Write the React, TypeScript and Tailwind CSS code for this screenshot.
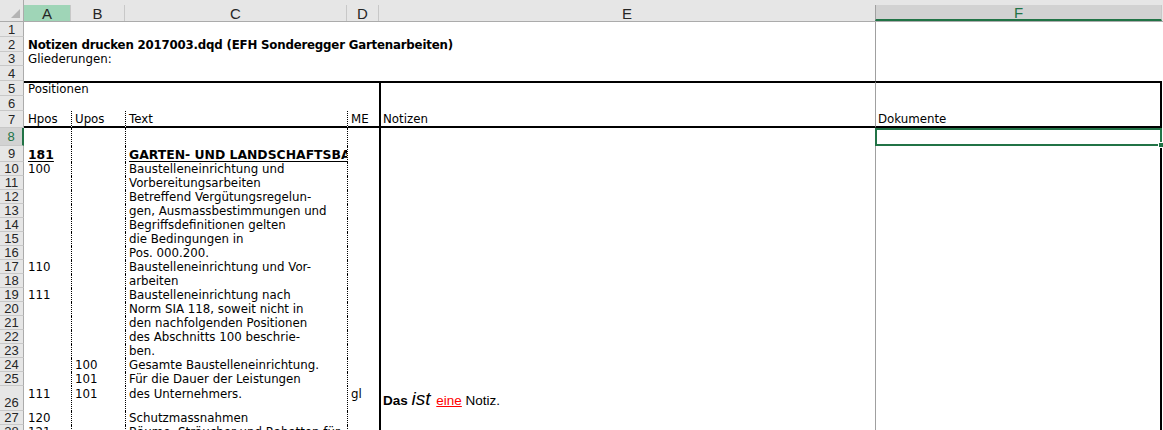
import type { ReactNode } from 'react'

type RowDef = {
  n: number
  h: string
  a?: ReactNode
  b?: ReactNode
  c?: ReactNode
  d?: ReactNode
  e?: ReactNode
  f?: ReactNode
  top?: boolean
  clipC?: boolean
}

const BU = ({ children }: { children: ReactNode }) => <span className="font-bold text-[12.4px] underline underline-offset-2">{children}</span>

const note = (
  <span className="font-['Liberation_Sans',Arial,sans-serif] text-[13.5px] leading-[20px] text-black">
    <span className="font-bold">Das</span>{' '}
    <span className="italic text-[19px]">ist</span>{' '}
    <span className="ml-[2px] text-[#ff0000] underline underline-offset-1">eine</span>{' '}
    Notiz.
  </span>
)

const rows: RowDef[] = [
  { n: 1, h: 'h-[15px]' },
  { n: 2, h: 'h-[15px]', a: <span className="font-bold tracking-[-0.2px]">Notizen drucken 2017003.dqd (EFH Sonderegger Gartenarbeiten)</span> },
  { n: 3, h: 'h-[14px]', a: 'Gliederungen:' },
  { n: 4, h: 'h-[15px]' },
  { n: 5, h: 'h-[15px]', a: 'Positionen' },
  { n: 6, h: 'h-[15px]' },
  { n: 7, h: 'h-[17px]', a: 'Hpos', b: 'Upos', c: 'Text', d: 'ME', e: 'Notizen', f: 'Dokumente' },
  { n: 8, h: 'h-[18px]' },
  { n: 9, h: 'h-[16px]', a: <BU>181</BU>, c: <BU>GARTEN- UND LANDSCHAFTSBAU</BU>, clipC: true },
  { n: 10, h: 'h-[14px]', a: '100', c: 'Baustelleneinrichtung und' },
  { n: 11, h: 'h-[14px]', c: 'Vorbereitungsarbeiten' },
  { n: 12, h: 'h-[14px]', c: 'Betreffend Vergütungsregelun-' },
  { n: 13, h: 'h-[14px]', c: 'gen, Ausmassbestimmungen und' },
  { n: 14, h: 'h-[14px]', c: 'Begriffsdefinitionen gelten' },
  { n: 15, h: 'h-[14px]', c: 'die Bedingungen in' },
  { n: 16, h: 'h-[14px]', c: 'Pos. 000.200.' },
  { n: 17, h: 'h-[14px]', a: '110', c: 'Baustelleneinrichtung und Vor-' },
  { n: 18, h: 'h-[14px]', c: 'arbeiten' },
  { n: 19, h: 'h-[14px]', a: '111', c: 'Baustelleneinrichtung nach' },
  { n: 20, h: 'h-[14px]', c: 'Norm SIA 118, soweit nicht in' },
  { n: 21, h: 'h-[14px]', c: 'den nachfolgenden Positionen' },
  { n: 22, h: 'h-[14px]', c: 'des Abschnitts 100 beschrie-' },
  { n: 23, h: 'h-[14px]', c: 'ben.' },
  { n: 24, h: 'h-[14px]', b: '100', c: 'Gesamte Baustelleneinrichtung.' },
  { n: 25, h: 'h-[14px]', b: '101', c: 'Für die Dauer der Leistungen' },
  { n: 26, h: 'h-[25px]', a: '111', b: '101', c: 'des Unternehmers.', d: 'gl', e: note, top: true },
  { n: 27, h: 'h-[14px]', a: '120', c: 'Schutzmassnahmen' },
  { n: 28, h: 'h-[14px]', a: '121', c: 'Bäume, Sträucher und Rabatten für' },
]

function SheetRow({ r }: { r: RowDef }) {
  const boxed = r.n >= 5
  // hair-dotted column rules, left side only so the row 7 bottom rule stays solid
  const dotted = r.n >= 7 ? 'border-l border-l-black [border-left-style:dotted]' : ''
  const tb = r.n === 5 ? 'border-t-2 border-t-black' : ''
  const bb = r.n === 7 ? 'border-b-2 border-b-black' : ''
  const al = r.top ? 'items-start pt-[1px]' : 'items-end'
  const sel = r.n === 8
  return (
    <div className={`flex shrink-0 ${r.h}`}>
      <div
        className={`w-[24px] shrink-0 flex justify-center border-b border-b-[#c8c8c8] font-['Liberation_Sans',Arial,sans-serif] text-[13px] leading-[13px] ${
          r.top ? 'items-end pb-[1px]' : 'items-center'
        } ${sel ? 'bg-[#d2d2d2] text-[#217346] border-r-2 border-r-[#217346]' : 'bg-[#e6e6e6] text-[#262626] border-r border-r-[#ababab]'}`}
      >
        {r.n}
      </div>
      <div className={`w-[47px] shrink-0 flex ${al} pl-[4px] whitespace-nowrap ${tb} ${bb}`}>
        <span className="leading-[14px]">{r.a}</span>
      </div>
      <div className={`w-[54px] shrink-0 flex ${al} pl-[3px] ${dotted} ${tb} ${bb}`}>
        <span className="leading-[14px]">{r.b}</span>
      </div>
      <div className={`w-[222px] shrink-0 flex ${al} pl-[3px] whitespace-nowrap ${r.clipC ? 'overflow-hidden' : ''} ${dotted} ${tb} ${bb}`}>
        <span className="leading-[14px]">{r.c}</span>
      </div>
      <div className={`w-[32px] shrink-0 flex ${al} pl-[3px] ${dotted} ${tb} ${bb}`}>
        <span className="leading-[14px]">{r.d}</span>
      </div>
      <div className={`w-[496px] shrink-0 flex items-end pl-[2px] whitespace-nowrap ${boxed ? 'border-l-2 border-l-black' : ''} ${tb} ${bb}`}>
        <span className="leading-[14px]">{r.e}</span>
      </div>
      {sel ? (
        <div className="w-[287px] shrink-0 relative border-2 border-[#217346]">
          <div className="absolute -right-[4px] -bottom-[4px] w-[6px] h-[6px] bg-[#217346] border border-white" />
        </div>
      ) : (
        <div
          className={`w-[287px] shrink-0 flex items-end pl-[2px] border-l border-l-[#a0a0a0] ${boxed ? 'border-r-2 border-r-black' : ''} ${tb} ${bb}`}
        >
          <span className="leading-[14px]">{r.f}</span>
        </div>
      )}
      <div className="flex-1" />
    </div>
  )
}

const headers = [
  { k: 'A', w: 'w-[47px]', cls: 'bg-[#9fd5b7] text-[#262626] border-r border-r-[#c8c8c8]' },
  { k: 'B', w: 'w-[54px]', cls: 'text-[#262626] border-r border-r-[#c8c8c8]' },
  { k: 'C', w: 'w-[222px]', cls: 'text-[#262626] border-r border-r-[#c8c8c8]' },
  { k: 'D', w: 'w-[32px]', cls: 'text-[#262626] border-r border-r-[#c8c8c8]' },
  { k: 'E', w: 'w-[496px]', cls: 'text-[#262626]' },
  { k: 'F', w: 'w-[287px]', cls: 'bg-[#d2d2d2] text-[#217346] border-l border-l-[#a0a0a0] border-b-2 border-b-[#217346] border-r border-r-[#c8c8c8]' },
]

export default function App() {
  return (
    <div className="w-[1163px] h-[430px] overflow-hidden bg-white flex flex-col text-black font-['DejaVu_Sans',Verdana,sans-serif] text-[11.8px]">
      <div className="flex shrink-0 h-[22px] bg-[#e6e6e6] border-b border-b-[#ababab]">
        <div className="w-[24px] shrink-0 flex items-end justify-end pr-[3px] pb-[3px] border-r border-r-[#ababab]">
          <svg width="9" height="9" viewBox="0 0 9 9">
            <path d="M9 0 L9 9 L0 9 Z" fill="#b4b4b4" />
          </svg>
        </div>
        {headers.map(h => (
          <div
            key={h.k}
            className={`${h.w} shrink-0 mt-[5px] flex items-center justify-center font-['Liberation_Sans',Arial,sans-serif] text-[15px] leading-[15px] ${h.cls}`}
          >
            {h.k}
          </div>
        ))}
        <div className="flex-1" />
      </div>
      {rows.map(r => (
        <SheetRow key={r.n} r={r} />
      ))}
    </div>
  )
}
